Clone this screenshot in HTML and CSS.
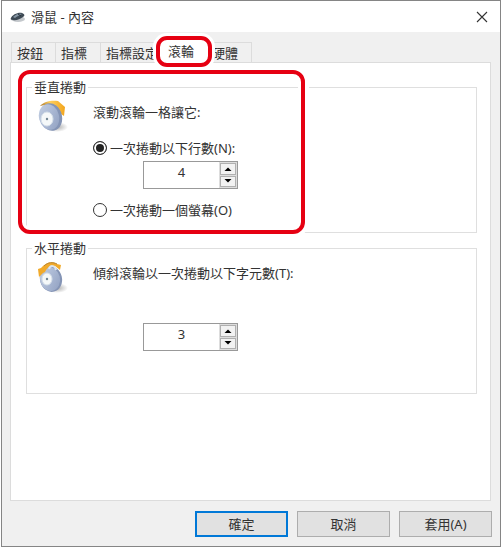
FILE: index.html
```
<!DOCTYPE html>
<html lang="zh-Hant">
  <head>
    <meta charset="UTF-8" />
    <meta name="viewport" content="width=device-width, initial-scale=1.0" />
    <title>滑鼠 - 內容</title>
    <link rel="stylesheet" href="styles.css">
  </head>

  <body>
    <div class="window">
      <header class="titlebar">
        <svg class="mouse-icon" width="16" height="12" viewBox="0 0 16 12">
          <ellipse cx="8" cy="8" rx="7" ry="3" fill="#c4c8cc" />
          <path d="M1 7 C2 4 8 1 12 2 C15 3 15 5 13 6 C10 8 6 10 3 9 C1 9 0 8 1 7Z" fill="#3d4954" />
          <path d="M3 6 C6 3 9 2 12 3 C10 4 7 5 5 7Z" fill="#8797a5" />
          <path d="M8 3 L11 5" stroke="#26303a" fill="none" />
        </svg>
        <h1>滑鼠 - 內容</h1>
        <button class="close" type="button" aria-label="關閉">
          <svg width="12" height="12" viewBox="0 0 12 12">
            <path d="M1 1 L11 11 M11 1 L1 11" stroke="#333" stroke-width="1.1" fill="none" />
          </svg>
        </button>
      </header>

      <!-- Tabs -->
      <div class="tabs" role="tablist">
        <button class="tab" type="button" role="tab">按鈕</button>
        <button class="tab" type="button" role="tab">指標</button>
        <button class="tab tab-long" type="button" role="tab">指標設定</button>
        <button class="tab active" type="button" role="tab" aria-selected="true">滾輪</button>
        <button class="tab" type="button" role="tab">硬體</button>
      </div>

      <main class="panel" role="tabpanel">
        <!-- Vertical scrolling -->
        <fieldset class="group">
          <legend>垂直捲動</legend>
          <div class="group-body">
            <svg class="wheel-icon" width="32" height="34" viewBox="0 0 32 34">
              <defs>
                <linearGradient id="tire" x1="0" y1="0" x2="1" y2="1">
                  <stop offset="0" stop-color="#c3cfe2" />
                  <stop offset="0.5" stop-color="#abb9d4" />
                  <stop offset="1" stop-color="#8f9fc0" />
                </linearGradient>
                <linearGradient id="gold" x1="0" y1="0" x2="1" y2="0">
                  <stop offset="0" stop-color="#a9762b" />
                  <stop offset="0.4" stop-color="#ffd05e" />
                  <stop offset="1" stop-color="#f2a51d" />
                </linearGradient>
                <radialGradient id="shade">
                  <stop offset="0" stop-color="#777" stop-opacity="0.6" />
                  <stop offset="1" stop-color="#777" stop-opacity="0" />
                </radialGradient>
              </defs>
              <ellipse cx="20" cy="27" rx="11" ry="5" fill="url(#shade)" />
              <path d="M3 6 C7 1 15 0 21 1 L28 7 L27 16 L24 14 C20 7 13 3 3 6Z" fill="url(#gold)" />
              <ellipse cx="14" cy="17" rx="11" ry="14" fill="#8494b5" transform="rotate(-14 14 17)" />
              <ellipse cx="12" cy="17" rx="10" ry="13" fill="url(#tire)" transform="rotate(-14 12 17)" />
              <ellipse cx="10" cy="19" rx="6" ry="7" fill="#f5f8f9" stroke="#d5dfe9" />
              <circle cx="10" cy="19" r="1.2" fill="#728694" />
            </svg>
            <div class="controls">
              <p>滾動滾輪一格讓它:</p>
              <label class="option option-lines">
                <input type="radio" name="scroll" checked />
                一次捲動以下行數(N):
              </label>
              <div class="spinner">
                <input type="number" value="4" aria-label="行數" />
                <div class="arrows">
                  <button type="button" aria-label="增加"><svg width="8" height="4" viewBox="0 0 8 4"><path d="M0.5 4 L4 0.5 L7.5 4Z" /></svg></button>
                  <button type="button" aria-label="減少"><svg width="8" height="4" viewBox="0 0 8 4"><path d="M0.5 0 L4 3.5 L7.5 0Z" /></svg></button>
                </div>
              </div>
              <label class="option option-screen">
                <input type="radio" name="scroll" />
                一次捲動一個螢幕(O)
              </label>
            </div>
          </div>
          <div class="highlight"></div>
        </fieldset>

        <!-- Horizontal scrolling -->
        <fieldset class="group">
          <legend>水平捲動</legend>
          <div class="group-body">
            <svg class="wheel-icon" width="32" height="34" viewBox="0 0 32 34">
              <ellipse cx="20" cy="27" rx="11" ry="5" fill="url(#shade)" />
              <ellipse cx="14" cy="18" rx="11" ry="13" fill="#8494b5" transform="rotate(-14 14 18)" />
              <ellipse cx="13" cy="18" rx="10" ry="12" fill="url(#tire)" transform="rotate(-14 13 18)" />
              <path d="M1 8 L4 7 C9 1 16 0 20 3 L24 4 L23 9 L18 5 C13 4 10 7 8 11 L6 12 L2 16Z" fill="#f1aa2b" />
              <path d="M7 5 C11 1 16 1 20 3" stroke="#b98532" stroke-width="1" fill="none" />
              <path d="M12 8 C13 4 18 4 19 9" stroke="#dce5ef" stroke-width="2" fill="none" />
              <ellipse cx="10" cy="18" rx="5" ry="6" fill="#f5f8f9" stroke="#d5dfe9" />
              <circle cx="10" cy="18" r="1.2" fill="#728694" />
            </svg>
            <div class="controls controls-tilt">
              <p>傾斜滾輪以一次捲動以下字元數(T):</p>
              <div class="spinner">
                <input type="number" value="3" aria-label="字元數" />
                <div class="arrows">
                  <button type="button" aria-label="增加"><svg width="8" height="4" viewBox="0 0 8 4"><path d="M0.5 4 L4 0.5 L7.5 4Z" /></svg></button>
                  <button type="button" aria-label="減少"><svg width="8" height="4" viewBox="0 0 8 4"><path d="M0.5 0 L4 3.5 L7.5 0Z" /></svg></button>
                </div>
              </div>
            </div>
          </div>
        </fieldset>
      </main>

      <footer class="actions">
        <button class="btn btn-default" type="button">確定</button>
        <button class="btn" type="button">取消</button>
        <button class="btn" type="button">套用(A)</button>
      </footer>
    </div>
  </body>
</html>
```
FILE: styles.css
```
* {
  box-sizing: border-box;
}

body {
  margin: 0;
  background-color: white;
  font-family: "Noto Sans", "Noto Sans CJK TC", sans-serif;
  font-size: 13px;
  line-height: 18px;
  color: #333;
}

button,
input {
  font: inherit;
  color: inherit;
}

.window {
  display: flex;
  flex-direction: column;
  min-height: calc(100vh - 1px);
  margin: 0 0 1px 1px;
  border: 1px solid #858585;
  background-color: #f0f0f0;
}

.titlebar {
  display: flex;
  align-items: center;
  height: 31px;
  padding: 0 12px 0 8px;
  background-color: white;
}

h1 {
  flex: 1;
  margin: 0 0 0 5px;
  font-size: 13px;
  font-weight: normal;
}

.close {
  display: flex;
  padding: 0;
  border: none;
  background: none;
}

/* Tabs */
.tabs {
  display: flex;
  align-items: flex-end;
  height: 30px;
  padding: 0 9px;
}

.tab {
  width: 45px;
  height: 20px;
  padding: 0 0 0 5px;
  border: 1px solid #dcdcdc;
  border-width: 1px 1px 0 0;
  background-color: #f0f0f0;
  line-height: 18px;
  text-align: left;
  white-space: nowrap;
}

.tab:first-child {
  border-left-width: 1px;
}

.tab-long {
  width: 60px;
}

.tab.active {
  position: relative;
  z-index: 1;
  width: 56px;
  height: 31px;
  margin: 0 -5px -5px;
  padding: 0 0 2px 8px;
  border: 4px solid #e60012;
  border-radius: 11px;
  background-color: white;
  box-shadow: 0 0 0 3px white;
}

/* Panel and groups */
.panel {
  flex: 1;
  margin: 0 9px 0 8px;
  padding: 15px 13px 15px 15px;
  border: 1px solid #dcdcdc;
  background-color: white;
}

.group {
  position: relative;
  min-width: 0;
  margin: 0 0 6px;
  padding: 0 5px;
  border: 1px solid #dfdfdf;
}

legend {
  padding: 0 2px;
}

.group-body {
  display: flex;
  gap: 24px;
  padding: 4px 0 13px 5px;
}

.wheel-icon {
  flex: none;
}

.controls {
  display: flex;
  flex-direction: column;
  align-items: flex-start;
  padding-top: 3px;
}

.controls p {
  margin: 0;
}

.option {
  display: flex;
  align-items: center;
  gap: 3px;
}

.option-lines {
  margin: 18px 0 4px;
}

.option-screen {
  margin-top: 12px;
}

.option input {
  appearance: none;
  width: 14px;
  height: 14px;
  margin: 0;
  border: 1px solid #333;
  border-radius: 50%;
  background-color: white;
}

.option input:checked {
  background-color: #222;
  box-shadow: inset 0 0 0 2px white;
}

/* The highlight is measured from below the legend */
.highlight {
  position: absolute;
  top: -26px;
  bottom: -2px;
  left: -9px;
  width: 287px;
  border: 4px solid #e60012;
  border-radius: 12px;
  box-shadow: 0 0 0 4px white, inset 0 0 0 3px white;
  pointer-events: none;
}

/* Number box with up and down arrows */
.spinner {
  display: flex;
  width: 95px;
  height: 28px;
  margin-left: 50px;
  border: 1px solid #999;
  background-color: white;
}

.controls-tilt .spinner {
  margin-top: 41px;
  margin-bottom: 29px;
}

.spinner input {
  appearance: textfield;
  flex: 1;
  min-width: 0;
  padding: 0 0 6px;
  border: none;
  outline: none;
  background: none;
  text-align: center;
}

.spinner input::-webkit-inner-spin-button {
  display: none;
}

.arrows {
  display: flex;
  flex-direction: column;
  gap: 1px;
  width: 18px;
  padding: 1px;
  background-color: #ddd;
}

.arrows button {
  display: flex;
  flex: 1;
  align-items: center;
  justify-content: center;
  padding: 0;
  border: 1px solid #b0b0b0;
  background-color: #f2f2f2;
}

/* Bottom buttons */
.actions {
  display: flex;
  justify-content: flex-end;
  gap: 9px;
  padding: 10px 8px 9px;
}

.btn {
  width: 93px;
  height: 26px;
  padding: 0;
  border: 1px solid #adadad;
  background-color: #e1e1e1;
}

.btn-default {
  border: 2px solid #0078d7;
}
```
